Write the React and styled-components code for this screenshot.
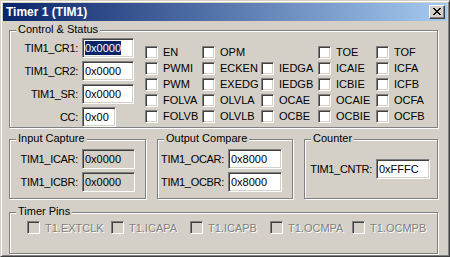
import React from 'react';
import styled, { createGlobalStyle } from 'styled-components';

const GlobalStyle = createGlobalStyle`
  html, body { margin: 0; padding: 0; background: #d4d0c8; }
  body { font-family: "Liberation Sans", Arial, sans-serif; font-size: 11px; color: #000; }
  * { box-sizing: border-box; }
`;

const Window = styled.div`
  width: 450px;
  height: 257px;
  background: #d4d0c8;
  border: 1px solid;
  border-color: #d4d0c8 #404040 #404040 #d4d0c8;
  box-shadow: inset 1px 1px 0 #fff, inset -1px -1px 0 #808080;
  padding: 2px;
  display: flex;
  flex-direction: column;
`;

const TitleBar = styled.div`
  height: 18px;
  flex: none;
  display: flex;
  align-items: center;
  justify-content: space-between;
  padding: 0 2px 0 3px;
  background: linear-gradient(to right, #0a246a, #a6caf0);
`;

const Title = styled.span`
  color: #fff;
  font-weight: bold;
  font-size: 12px;
  line-height: 14px;
`;

const CloseButton = styled.div`
  width: 16px;
  height: 14px;
  background: #d4d0c8;
  border: 1px solid;
  border-color: #fff #404040 #404040 #fff;
  box-shadow: inset -1px -1px 0 #808080;
  display: flex;
  align-items: flex-start;
  justify-content: flex-start;
`;

const Body = styled.div`
  flex: 1;
  display: flex;
  flex-direction: column;
  padding: 9px 9px 0 6px;
`;

const Group = styled.div`
  position: relative;
  border: 1px solid #808080;
  box-shadow: inset 1px 1px 0 #fff, 1px 1px 0 #fff;
  height: ${p => p.$h}px;
  width: ${p => (p.$w ? `${p.$w}px` : 'auto')};
  flex: ${p => (p.$w ? 'none' : '1')};
  padding: ${p => p.$pad || '0'};
  margin-top: ${p => p.$mt || 0}px;
`;

const Legend = styled.span`
  position: absolute;
  top: -8px;
  left: 6px;
  padding: 0 2px;
  background: #d4d0c8;
  line-height: 13px;
  white-space: nowrap;
`;

const ControlRow = styled.div`
  display: flex;
  align-items: flex-start;
`;

const Fields = styled.div`
  display: flex;
  flex-direction: column;
  gap: 3px;
`;

const FieldRow = styled.div`
  display: flex;
  align-items: center;
  gap: 4px;
`;

const FieldLabel = styled.span`
  width: ${p => p.$w}px;
  text-align: right;
  white-space: nowrap;
  letter-spacing: -0.3px;
`;

const Edit = styled.div`
  width: ${p => p.$w}px;
  height: 20px;
  border: 1px solid;
  border-color: #808080 #fff #fff #808080;
  box-shadow: inset 1px 1px 0 #404040, inset -1px -1px 0 #d4d0c8;
  background: ${p => (p.$readOnly ? '#d4d0c8' : '#fff')};
  display: flex;
  align-items: center;
  padding-left: 2px;
  white-space: nowrap;
`;

const Selected = styled.span`
  background: #0a246a;
  color: #fff;
  line-height: 14px;
`;

const CheckGrid = styled.div`
  display: grid;
  grid-template-columns: 57px 59px 57px 58px auto;
  grid-auto-rows: 16px;
  margin: 6px 0 0 11px;
`;

const Check = styled.div`
  display: flex;
  align-items: center;
  gap: 5px;
  white-space: nowrap;
  color: ${p => (p.$disabled ? '#808080' : '#000')};
  text-shadow: ${p => (p.$disabled ? '1px 1px 0 #fff' : 'none')};
`;

const Box = styled.span`
  width: 13px;
  height: 13px;
  flex: none;
  border: 1px solid;
  border-color: #808080 #fff #fff #808080;
  box-shadow: inset 1px 1px 0 #404040, inset -1px -1px 0 #d4d0c8;
  background: ${p => (p.$disabled ? '#d4d0c8' : '#fff')};
`;

const GroupsRow = styled.div`
  display: flex;
  gap: 11px;
  margin-top: 11px;
`;

const PinGrid = styled.div`
  display: grid;
  grid-template-columns: 84px 79px 80px 82px auto;
`;

const checkRows = [
  ['EN', 'OPM', null, 'TOE', 'TOF'],
  ['PWMI', 'ECKEN', 'IEDGA', 'ICAIE', 'ICFA'],
  ['PWM', 'EXEDG', 'IEDGB', 'ICBIE', 'ICFB'],
  ['FOLVA', 'OLVLA', 'OCAE', 'OCAIE', 'OCFA'],
  ['FOLVB', 'OLVLB', 'OCBE', 'OCBIE', 'OCFB'],
];

const pins = ['T1.EXTCLK', 'T1.ICAPA', 'T1.ICAPB', 'T1.OCMPA', 'T1.OCMPB'];

function CloseIcon() {
  return (
    <svg width="14" height="12" viewBox="0 0 14 12" shapeRendering="crispEdges">
      <path
        d="M3 2h2v1h-2zM9 2h2v1h-2zM4 3h2v1h-2zM8 3h2v1h-2zM5 4h4v1h-4zM6 5h2v1h-2zM5 6h4v1h-4zM4 7h2v1h-2zM8 7h2v1h-2zM3 8h2v1h-2zM9 8h2v1h-2z"
        fill="#000"
      />
    </svg>
  );
}

function Field({ label, value, lw, iw, readOnly, selected }) {
  return (
    <FieldRow>
      <FieldLabel $w={lw}>{label}</FieldLabel>
      <Edit $w={iw} $readOnly={readOnly}>
        {selected ? <Selected>{value}</Selected> : value}
      </Edit>
    </FieldRow>
  );
}

export default function App() {
  return (
    <>
      <GlobalStyle />
      <Window>
        <TitleBar>
          <Title>Timer 1 (TIM1)</Title>
          <CloseButton>
            <CloseIcon />
          </CloseButton>
        </TitleBar>
        <Body>
          <Group $h={104} $pad="7px 0 0 0">
            <Legend>Control &amp; Status</Legend>
            <ControlRow>
              <Fields>
                <Field label="TIM1_CR1:" value="0x0000" lw={68} iw={52} selected />
                <Field label="TIM1_CR2:" value="0x0000" lw={68} iw={52} />
                <Field label="TIM1_SR:" value="0x0000" lw={68} iw={52} />
                <Field label="CC:" value="0x00" lw={68} iw={34} />
              </Fields>
              <CheckGrid>
                {checkRows.flat().map((name, i) =>
                  name ? (
                    <Check key={i}>
                      <Box />
                      {name}
                    </Check>
                  ) : (
                    <span key={i} />
                  )
                )}
              </CheckGrid>
            </ControlRow>
          </Group>
          <GroupsRow>
            <Group $w={137} $h={60} $pad="9px 0 0 0">
              <Legend>Input Capture</Legend>
              <Fields>
                <Field label="TIM1_ICAR:" value="0x0000" lw={68} iw={53} readOnly />
                <Field label="TIM1_ICBR:" value="0x0000" lw={68} iw={53} readOnly />
              </Fields>
            </Group>
            <Group $w={136} $h={60} $pad="9px 0 0 0">
              <Legend>Output Compare</Legend>
              <Fields>
                <Field label="TIM1_OCAR:" value="0x8000" lw={66} iw={54} />
                <Field label="TIM1_OCBR:" value="0x8000" lw={66} iw={54} />
              </Fields>
            </Group>
            <Group $h={60} $pad="19px 0 0 0">
              <Legend>Counter</Legend>
              <Field label="TIM1_CNTR:" value="0xFFFC" lw={67} iw={54} />
            </Group>
          </GroupsRow>
          <Group $h={29} $mt={13} $pad="8px 0 0 17px">
            <Legend>Timer Pins</Legend>
            <PinGrid>
              {pins.map(p => (
                <Check key={p} $disabled>
                  <Box $disabled />
                  {p}
                </Check>
              ))}
            </PinGrid>
          </Group>
        </Body>
      </Window>
    </>
  );
}
